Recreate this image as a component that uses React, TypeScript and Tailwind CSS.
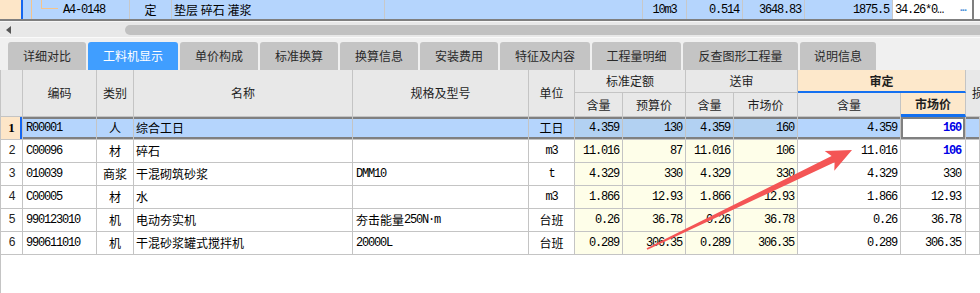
import React from 'react';

const CJK = "font-['Noto_Sans_CJK_SC',sans-serif]";
const MONO = "font-['Liberation_Mono',monospace] text-[12px] tracking-[-1.2px]";

const COLS =
  'grid grid-cols-[22px_74px_37px_219px_176px_46px_48px_63px_48px_64px_103px_65px_1fr]';

type Row = {
  no: number;
  code: string;
  type: string;
  name: string;
  spec?: React.ReactNode;
  unit: string;
  unitCjk?: boolean;
  q1: string;
  p1: string;
  q2: string;
  p2: string;
  q3: string;
  p3: string;
  blue?: boolean;
};

const rows: Row[] = [
  { no: 1, code: 'R00001', type: '人', name: '综合工日', unit: '工日', unitCjk: true, q1: '4.359', p1: '130', q2: '4.359', p2: '160', q3: '4.359', p3: '160', blue: true },
  { no: 2, code: 'C00096', type: '材', name: '碎石', unit: 'm3', q1: '11.016', p1: '87', q2: '11.016', p2: '106', q3: '11.016', p3: '106', blue: true },
  { no: 3, code: '010039', type: '商浆', name: '干混砌筑砂浆', spec: <span className={MONO}>DMM10</span>, unit: 't', q1: '4.329', p1: '330', q2: '4.329', p2: '330', q3: '4.329', p3: '330' },
  { no: 4, code: 'C00005', type: '材', name: '水', unit: 'm3', q1: '1.866', p1: '12.93', q2: '1.866', p2: '12.93', q3: '1.866', p3: '12.93' },
  {
    no: 5,
    code: '990123010',
    type: '机',
    name: '电动夯实机',
    spec: (
      <>
        <span className={CJK}>夯击能量</span>
        <span className={MONO}>250N·m</span>
      </>
    ),
    unit: '台班',
    unitCjk: true,
    q1: '0.26', p1: '36.78', q2: '0.26', p2: '36.78', q3: '0.26', p3: '36.78',
  },
  { no: 6, code: '990611010', type: '机', name: '干混砂浆罐式搅拌机', spec: <span className={MONO}>20000L</span>, unit: '台班', unitCjk: true, q1: '0.289', p1: '306.35', q2: '0.289', p2: '306.35', q3: '0.289', p3: '306.35' },
];

const tabs = ['详细对比', '工料机显示', '单价构成', '标准换算', '换算信息', '安装费用', '特征及内容', '工程量明细', '反查图形工程量', '说明信息'];
const tabW = ['w-[78px]', 'w-[90px]', 'w-[78px]', 'w-[78px]', 'w-[78px]', 'w-[78px]', 'w-[90px]', 'w-[89px]', 'w-[115px]', 'w-[76px]'];

const cell = 'flex h-full items-center overflow-hidden whitespace-nowrap border-r border-b border-[#c4c4c4]';
const head = `flex items-center justify-center border-r border-b border-[#c4c4c4] bg-[#e8e8e8] text-[12px] text-[#1e1e1e] ${CJK}`;

function TopRow() {
  return (
    <div className="flex h-[21px] border-b-2 border-[#7f7f7f] bg-[#b5d5fd] text-[12px] text-black">
      <div className="w-[21px] bg-[#fde6c8]" />
      <div className="w-[2px] bg-[#1466f0]" />
      <div className="flex w-[107px] items-center border-r border-[#c8c8c8]">
        <svg width="40" height="19" className="shrink-0">
          <line x1="8.5" y1="0" x2="8.5" y2="19" stroke="#f5c48a" />
          <line x1="18.5" y1="0" x2="18.5" y2="8" stroke="#f5c48a" />
          <line x1="18" y1="8.5" x2="35" y2="8.5" stroke="#f5c48a" />
        </svg>
        <span className={MONO}>A4-0148</span>
      </div>
      <div className={`flex w-[42px] items-center justify-center border-r border-[#c8c8c8] ${CJK}`}>定</div>
      <div className={`flex w-[213px] items-center border-r border-[#c8c8c8] pl-[2px] ${CJK}`}>垫层 碎石 灌浆</div>
      <div className="w-[258px] border-r border-[#c8c8c8]" />
      <div className={`flex w-[44px] items-center justify-center border-r border-[#c8c8c8] ${MONO}`}>10m3</div>
      <div className={`flex w-[56px] items-center justify-end border-r border-[#c8c8c8] pr-[3px] ${MONO}`}>0.514</div>
      <div className={`flex w-[62px] items-center justify-end border-r border-[#c8c8c8] pr-[3px] ${MONO}`}>3648.83</div>
      <div className={`flex w-[88px] items-center justify-end border-r border-[#c8c8c8] pr-[3px] ${MONO}`}>1875.5</div>
      <div className="flex w-[81px] items-center justify-between border-r-2 border-[#7f7f7f] bg-white pl-[2px] pr-[6px]">
        <span className={MONO}>34.26*0…</span>
        <span className="text-[11px] font-bold leading-none tracking-[-1px] text-[#4a90d9]">···</span>
      </div>
      <div className="flex-1 bg-white" />
    </div>
  );
}

function ScrollBar() {
  return (
    <div className="flex h-[16px] border-t border-[#f6f6f6] bg-[#e8e8e8]">
      <div className="flex w-[125px] items-center pl-[6px]">
        <svg width="5" height="8" viewBox="0 0 5 8">
          <polygon points="5,0 0,4 5,8" fill="#555" />
        </svg>
      </div>
      <div className="mt-[3px] h-[10px] flex-1 rounded-l-[5px] bg-[#c1c1c1]" />
    </div>
  );
}

function Tabs() {
  return (
    <div className="flex h-[33px] items-end gap-[2px] border-t border-[#fafafa] bg-[#f0f0f0] pl-[8px]">
      {tabs.map((t, i) => (
        <div
          key={t}
          className={`flex h-[28px] items-center justify-center rounded-t-[3px] text-[12px] ${CJK} ${tabW[i]} ${
            i === 1 ? 'bg-[#409eff] text-white' : 'bg-[#c4c4c4] text-[#2a2a2a]'
          }`}
        >
          {t}
        </div>
      ))}
    </div>
  );
}

function Header() {
  return (
    <div className={`${COLS} grid-rows-[23px_24px]`}>
      <div className={`${head} row-span-2`} />
      <div className={`${head} row-span-2`}>编码</div>
      <div className={`${head} row-span-2`}>类别</div>
      <div className={`${head} row-span-2`}>名称</div>
      <div className={`${head} row-span-2`}>规格及型号</div>
      <div className={`${head} row-span-2`}>单位</div>
      <div className={`${head} col-span-2`}>标准定额</div>
      <div className={`${head} col-span-2`}>送审</div>
      <div className={`${head} col-span-2 border-b-2 border-b-[#1470f0] !bg-[#fde8cb] font-bold`}>审定</div>
      <div className={`${head} row-span-2 justify-start pl-[6px]`}>损</div>
      <div className={head}>含量</div>
      <div className={head}>预算价</div>
      <div className={head}>含量</div>
      <div className={head}>市场价</div>
      <div className={head}>含量</div>
      <div className={`${head} border-b-[3px] border-b-[#1470f0] !bg-[#fde8cb] font-bold`}>市场价</div>
    </div>
  );
}

function BodyRow({ r }: { r: Row }) {
  const sel = r.no === 1;
  const line = sel ? 'shadow-[inset_0_2px_0_#808080,inset_0_-2px_0_#808080]' : '';
  const rowBg = sel ? 'bg-[#b5d5fd]' : 'bg-white';
  const mid = sel ? 'bg-[#b2d1f2]' : 'bg-[#fefee9]';
  const num = `${cell} ${line} justify-end pr-[3px] ${MONO}`;
  return (
    <div className={`${COLS} h-[23px] text-[12px] text-black`}>
      <div
        className={`${cell} justify-center ${
          sel
            ? "bg-[#fde6c8] font-['Liberation_Serif',serif] text-[13px] font-bold shadow-[inset_-2px_0_0_#1466f0]"
            : `bg-white ${MONO} text-[#222]`
        }`}
      >
        {r.no}
      </div>
      <div className={`${cell} ${line} ${rowBg} pl-[3px] ${MONO}`}>{r.code}</div>
      <div className={`${cell} ${line} ${rowBg} justify-center ${CJK}`}>{r.type}</div>
      <div className={`${cell} ${line} ${rowBg} pl-[2px] ${CJK}`}>{r.name}</div>
      <div className={`${cell} ${line} ${rowBg} pl-[3px]`}>{r.spec}</div>
      <div className={`${cell} ${line} ${rowBg} justify-center ${r.unitCjk ? CJK : MONO}`}>{r.unit}</div>
      <div className={`${num} ${mid}`}>{r.q1}</div>
      <div className={`${num} ${mid}`}>{r.p1}</div>
      <div className={`${num} ${mid}`}>{r.q2}</div>
      <div className={`${num} ${mid}`}>{r.p2}</div>
      <div className={`${num} ${rowBg}`}>{r.q3}</div>
      <div
        className={`${cell} justify-end bg-white pr-[4px] ${MONO} ${
          sel ? 'shadow-[inset_0_0_0_2px_#808080]' : ''
        } ${r.blue ? 'font-bold text-[#0000e6]' : ''}`}
      >
        {r.p3}
      </div>
      <div className={`${cell} ${line} ${rowBg}`} />
    </div>
  );
}

export default function App() {
  return (
    <div className="relative h-[293px] w-[980px] overflow-hidden bg-white">
      <TopRow />
      <ScrollBar />
      <Tabs />
      <div className="h-full border-l border-[#c4c4c4]">
        <Header />
        {rows.map((r) => (
          <BodyRow key={r.no} r={r} />
        ))}
      </div>
      {/* red annotation arrow */}
      <svg className="pointer-events-none absolute left-0 top-0" width="980" height="293">
        <polygon
          points="646.6,248.3 831.6,156 824.7,151 852,150 834.3,170.8 834.6,162.2 647.4,249.7"
          fill="#f45555"
        />
      </svg>
    </div>
  );
}
